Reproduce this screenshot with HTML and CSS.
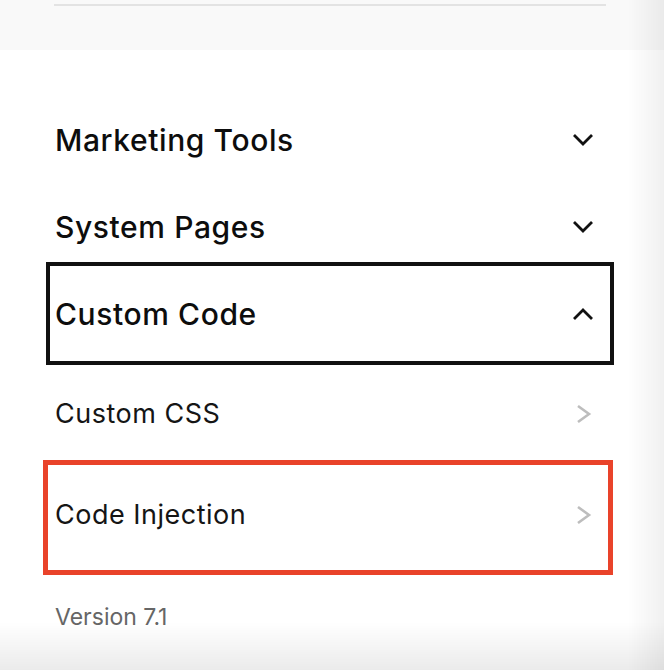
FILE: index.html
```html
<!DOCTYPE html>
<html lang="en">
<head>
<meta charset="utf-8">
<title>Settings – Advanced</title>
<link rel="stylesheet" href="styles.css">
</head>
<body>
<div class="page">
  <div class="topband"><div class="divider"></div></div>
  <nav class="menu">
    <div class="section">
      <span class="section-title">Marketing Tools</span>
      <svg class="chev" width="22" height="14" viewBox="0 0 22 14"><polyline points="2,2 11,11 20,2"/></svg>
    </div>
    <div class="section">
      <span class="section-title">System Pages</span>
      <svg class="chev" width="22" height="14" viewBox="0 0 22 14"><polyline points="2,2 11,11 20,2"/></svg>
    </div>
    <div class="section section-open">
      <span class="section-title">Custom Code</span>
      <svg class="chev" width="22" height="14" viewBox="0 0 22 14"><polyline points="2,12 11,3 20,12"/></svg>
    </div>
    <div class="item">
      <span class="item-title">Custom CSS</span>
      <svg class="arrow" width="16" height="20" viewBox="0 0 16 20"><polyline points="2,2 13,10 2,18"/></svg>
    </div>
    <div class="item item-highlight">
      <span class="item-title">Code Injection</span>
      <svg class="arrow" width="16" height="20" viewBox="0 0 16 20"><polyline points="2,2 13,10 2,18"/></svg>
    </div>
    <div class="version">Version 7.1</div>
  </nav>
</div>
<div class="vignette"></div>
</body>
</html>
```

FILE: styles.css
```css
* { box-sizing: border-box; }
html, body { margin: 0; padding: 0; background: #ffffff; }
body {
  font-family: Inter, "Noto Sans", "Liberation Sans", sans-serif;
  color: #111111;
  width: 664px;
  height: 670px;
  overflow: hidden;
}
.page { width: 664px; }
.topband {
  height: 50px;
  background: #f9f9f9;
  padding: 4px 58px 0 54px;
}
.divider { height: 2px; background: #e3e3e3; }
.menu {
  display: flex;
  flex-direction: column;
  padding: 46px 50px 0 46px;
}
.section {
  height: 87px;
  display: flex;
  align-items: center;
  justify-content: space-between;
  border: 4px solid transparent;
  padding: 0 16px 0 5px;
}
.section-open {
  height: 103px;
  margin: -8px 0 0 0;
  border-color: #111111;
}
.section-title {
  font-size: 30px;
  font-weight: 500;
  letter-spacing: 0.6px;
  color: #0d0d0d;
}
.chev { display: block; fill: none; stroke: #111111; stroke-width: 2.8; }
.item {
  height: 95px;
  display: flex;
  align-items: center;
  justify-content: space-between;
  margin: 0 1px 0 -3px;
  border: 5px solid transparent;
  padding: 2px 16px 0 7px;
}
.item-highlight {
  height: 115px;
  border-color: #e9432a;
  padding: 0 16px 6px 7px;
}
.item-title {
  font-size: 27px;
  font-weight: 400;
  letter-spacing: 0.5px;
  color: #151515;
}
.arrow { display: block; fill: none; stroke: #bdbdbd; stroke-width: 2.6; }
.version {
  margin: 29px 0 0 9px;
  font-size: 23px;
  line-height: 26px;
  color: #666666;
}
.vignette {
  position: fixed;
  inset: 0;
  pointer-events: none;
  background:
    linear-gradient(to left, rgba(0,0,0,0.06), rgba(0,0,0,0) 36px),
    linear-gradient(to top, rgba(0,0,0,0.08), rgba(0,0,0,0) 48px);
}
```
